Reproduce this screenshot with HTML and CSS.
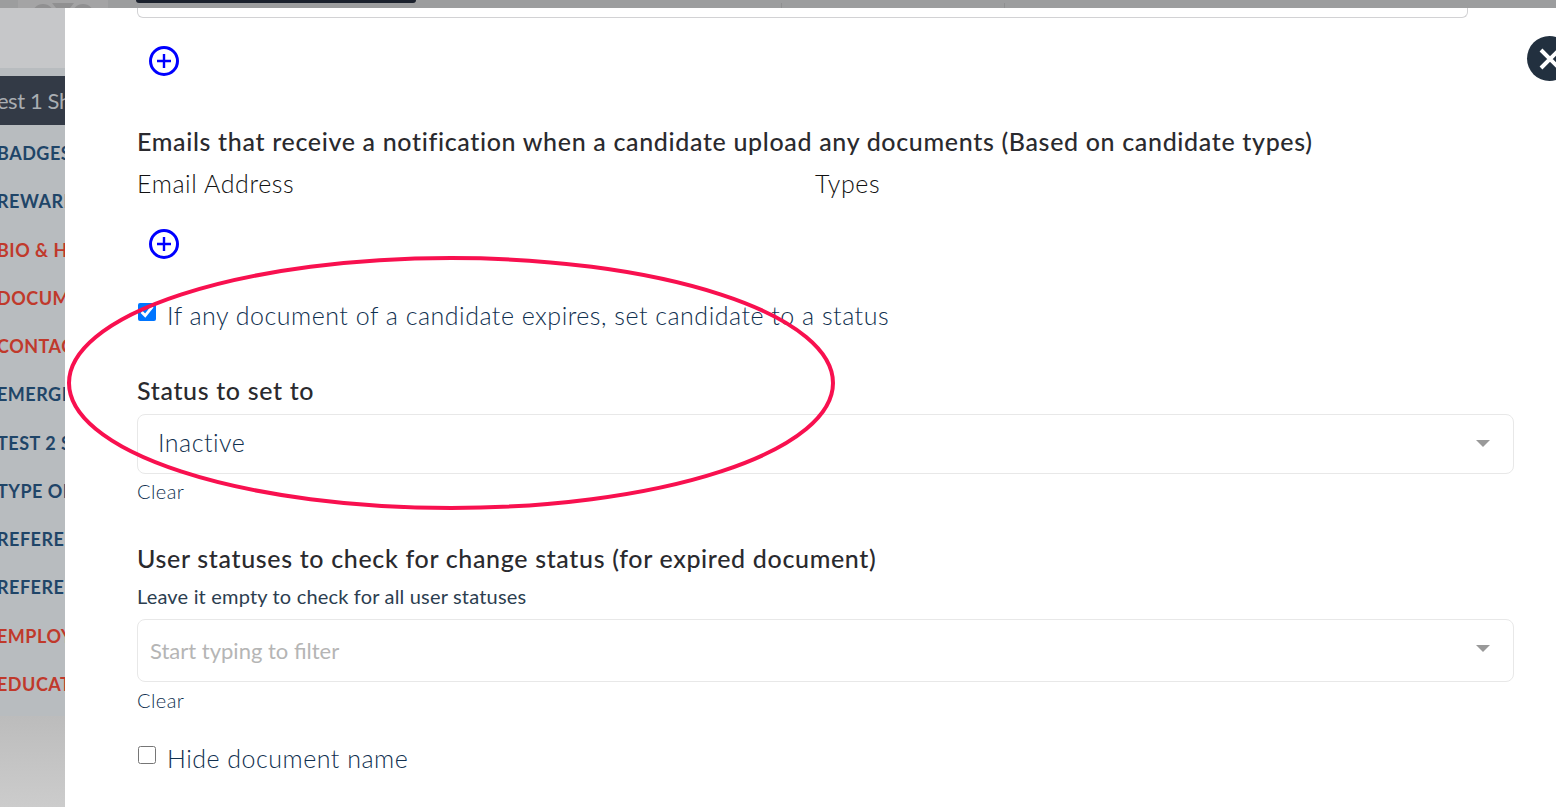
FILE: index.html
```html
<!doctype html>
<html lang="en">
  <head>
    <meta charset="UTF-8" />
    <title>Document settings</title>
    <link rel="stylesheet" href="styles.css">
  </head>
  <body>
    <div class="page">
      <!-- Page behind the modal, dimmed -->
      <div class="backdrop-top">
        <svg class="backdrop-logo" width="108" height="8" viewBox="0 0 108 8">
          <rect x="18" width="90" height="8" fill="#a4a4a5" />
          <circle cx="43" cy="15" r="11" fill="#909091" />
          <circle cx="83" cy="15" r="11" fill="#909091" />
          <path d="M52 3h22l-4 5H56z" fill="#909091" />
        </svg>
        <div class="backdrop-button"></div>
        <div class="backdrop-field"></div>
      </div>

      <div class="backdrop-main">
        <aside class="sidebar">
          <div class="sidebar-head"></div>
          <div class="sidebar-nav">
            <div class="sidebar-title">Test 1 Shift</div>
            <ul class="sidebar-list">
              <li class="blue">BADGES</li>
              <li class="blue">REWARDS</li>
              <li class="red">BIO &amp; HEALTH</li>
              <li class="red">DOCUMENTS</li>
              <li class="red">CONTACT</li>
              <li class="blue">EMERGENCY</li>
              <li class="blue">TEST 2 SHIFT</li>
              <li class="blue">TYPE OF</li>
              <li class="blue">REFERENCE</li>
              <li class="blue">REFERENCE</li>
              <li class="red">EMPLOYMENT</li>
              <li class="red">EDUCATION</li>
            </ul>
          </div>
          <div class="sidebar-foot"></div>
        </aside>

        <!-- Modal -->
        <main class="modal">
          <div class="field-stub"></div>

          <button class="add-btn first" type="button" aria-label="Add">
            <svg width="30" height="30" viewBox="0 0 30 30">
              <circle cx="15" cy="15" r="13.5" fill="none" stroke="#0000ff" stroke-width="3" />
              <path d="M15 8v14M8 15h14" fill="none" stroke="#0000ff" stroke-width="2.4" />
            </svg>
          </button>

          <h3 class="heading emails">Emails that receive a notification when a candidate upload any documents (Based on candidate types)</h3>
          <div class="columns">
            <span class="col-email">Email Address</span>
            <span>Types</span>
          </div>

          <button class="add-btn second" type="button" aria-label="Add">
            <svg width="30" height="30" viewBox="0 0 30 30">
              <circle cx="15" cy="15" r="13.5" fill="none" stroke="#0000ff" stroke-width="3" />
              <path d="M15 8v14M8 15h14" fill="none" stroke="#0000ff" stroke-width="2.4" />
            </svg>
          </button>

          <label class="check-row expires">
            <input type="checkbox" checked />
            <span>If any document of a candidate expires, set candidate to a status</span>
          </label>

          <h3 class="heading status">Status to set to</h3>
          <div class="select select-status">
            <span class="select-value">Inactive</span>
            <span class="caret"></span>
          </div>
          <a class="clear clear-status">Clear</a>

          <h3 class="heading user-statuses">User statuses to check for change status (for expired document)</h3>
          <p class="hint">Leave it empty to check for all user statuses</p>
          <div class="select select-filter">
            <span class="select-placeholder">Start typing to filter</span>
            <span class="caret"></span>
          </div>
          <a class="clear clear-filter">Clear</a>

          <label class="check-row hide-name">
            <input type="checkbox" />
            <span>Hide document name</span>
          </label>
        </main>
      </div>

      <!-- Close button sits over the modal edge -->
      <button class="close-btn" type="button" aria-label="Close">
        <svg width="24" height="24" viewBox="0 0 24 24">
          <path d="M3 3l18 18M21 3L3 21" fill="none" stroke="#fff" stroke-width="4" />
        </svg>
      </button>

      <!-- Hand-drawn annotation -->
      <svg class="annotation" width="780" height="262" viewBox="0 0 780 262">
        <ellipse cx="385" cy="131" rx="382" ry="125" fill="none" stroke="#f8104f" stroke-width="4" />
      </svg>
    </div>
  </body>
</html>
```

FILE: styles.css
```css
* {
  box-sizing: border-box;
}

html,
body {
  margin: 0;
  height: 100%;
  overflow: hidden;
}

body {
  font-family: Lato, "Noto Sans", sans-serif;
  color: #2a2a2e;
  background-color: #fff;
}

.page {
  position: relative;
  width: 1556px;
  height: 807px;
  overflow: hidden;
}

/* Dimmed page behind the modal */
.backdrop-top {
  height: 8px;
  background-color: #9c9d9e;
  display: flex;
}

.backdrop-logo {
  flex-shrink: 0;
}

.backdrop-button {
  width: 280px;
  height: 3px;
  margin-left: 28px;
  background-color: #1a202c;
  border-radius: 0 0 4px 4px;
}

.backdrop-field {
  width: 224px;
  height: 5px;
  margin: 3px 0 0 365px;
  border-left: 1px solid #8f9091;
  border-right: 1px solid #8f9091;
}

.backdrop-main {
  display: flex;
  height: 799px;
}

.sidebar {
  width: 65px;
  flex-shrink: 0;
  overflow: hidden;
  display: flex;
  flex-direction: column;
}

.sidebar-head {
  height: 60px;
  flex-shrink: 0;
  background-color: #c6c7c9;
}

.sidebar-nav {
  height: 648px;
  flex-shrink: 0;
  padding-top: 8px;
  background-color: #b8bcbf;
}

.sidebar-foot {
  flex: 1;
  background: linear-gradient(#bcbcbc, #cccccc);
}

.sidebar-title {
  width: 65px;
  height: 49px;
  background-color: #333a46;
  color: #a9adb2;
  font-size: 22px;
  letter-spacing: -0.4px;
  line-height: 49px;
  white-space: nowrap;
  text-indent: -13px;
  overflow: hidden;
}

.sidebar-list {
  list-style: none;
  margin: 4px 0 0;
  padding: 0;
  font-size: 18px;
  font-weight: 700;
  letter-spacing: 0.5px;
}

.sidebar-list li {
  height: 48.25px;
  line-height: 48px;
  white-space: nowrap;
  margin-left: -3px;
}

.sidebar-list .blue {
  color: #1f4568;
}

.sidebar-list .red {
  color: #c0392b;
}

.modal {
  flex: 1;
  padding: 0 42px 0 72px;
  background-color: #fff;
  display: flex;
  flex-direction: column;
  align-items: flex-start;
}

.field-stub {
  width: 1331px;
  height: 10px;
  border: 1px solid #d2d2d4;
  border-top: none;
  border-radius: 0 0 6px 6px;
}

.add-btn {
  display: block;
  width: 30px;
  height: 30px;
  margin-left: 12px;
  padding: 0;
  border: none;
  background: none;
}

.add-btn.first {
  margin-top: 28px;
}

.add-btn.second {
  margin-top: 30px;
}

.heading {
  margin: 0;
  font-size: 25px;
  line-height: 28px;
  font-weight: 500;
  letter-spacing: 0.66px;
  color: #2a2a2e;
}

.emails {
  margin-top: 51px;
}

.columns {
  display: flex;
  margin-top: 14px;
  margin-bottom: 2px;
  font-size: 25px;
  line-height: 28px;
  font-weight: 300;
  letter-spacing: 0.6px;
  color: #111;
}

.col-email {
  width: 678px;
}

.check-row {
  display: flex;
  align-items: center;
  height: 30px;
  font-size: 25px;
  font-weight: 300;
  letter-spacing: 0.5px;
  color: #10304f;
}

.check-row span {
  padding-bottom: 2px;
}

.check-row input {
  width: 18px;
  height: 18px;
  margin: 0 11px 8px 1px;
}

.expires {
  margin-top: 42px;
}

.status {
  margin-top: 45px;
  margin-bottom: 2px;
}

.select {
  position: relative;
  width: 100%;
  display: flex;
  align-items: center;
  border: 1px solid #e8e8e8;
  border-radius: 8px;
}

.select-status {
  height: 60px;
  margin-top: 8px;
  padding-left: 20px;
}

.select-filter {
  height: 63px;
  margin-top: 10px;
  padding-left: 12px;
}

.select-value {
  padding-bottom: 5px;
  font-size: 25px;
  font-weight: 300;
  letter-spacing: 0.5px;
  color: #10304f;
}

.select-placeholder {
  font-size: 22px;
  color: #b5b5b5;
}

.caret {
  position: absolute;
  right: 23px;
  top: 25px;
  border-top: 7px solid #999;
  border-left: 7px solid transparent;
  border-right: 7px solid transparent;
}

.clear {
  display: block;
  font-size: 20px;
  line-height: 24px;
  font-weight: 300;
  letter-spacing: 0.45px;
  color: #10304f;
}

.clear-status {
  margin-top: 5px;
}

.clear-filter {
  margin-top: 6px;
}

.user-statuses {
  margin-top: 41px;
  margin-bottom: 1px;
}

.hint {
  margin: 11px 0 1px;
  font-size: 20px;
  line-height: 24px;
  font-weight: 400;
  letter-spacing: 0.18px;
  color: #2c3e50;
}

.hide-name {
  margin-top: 32px;
}

.close-btn {
  position: absolute;
  left: 1527px;
  top: 36px;
  width: 45px;
  height: 45px;
  padding: 0;
  border: none;
  border-radius: 50%;
  background-color: #22303f;
  display: flex;
  align-items: center;
  justify-content: center;
}

.annotation {
  position: absolute;
  left: 66px;
  top: 252px;
  pointer-events: none;
}
```
